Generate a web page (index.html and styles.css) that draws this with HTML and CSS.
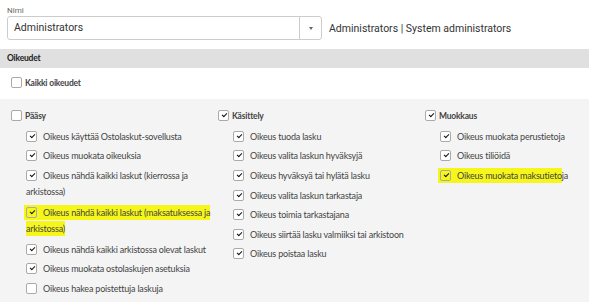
FILE: index.html
```html
<!DOCTYPE html>
<html lang="fi">
<head>
	<meta charset="UTF-8">
	<title>Oikeudet</title>
	<link rel="stylesheet" href="styles.css">
</head>
<body>
	<div class="field">
		<div class="field-label">Nimi</div>
		<div class="field-row">
			<div class="select">
				<span class="select-value">Administrators</span>
				<span class="select-btn"><span class="caret"></span></span>
			</div>
			<span class="select-desc">Administrators | System administrators</span>
		</div>
	</div>

	<div class="section-head">Oikeudet</div>

	<div class="all-row">
		<span class="cb"></span><span class="head-text">Kaikki oikeudet</span>
	</div>

	<div class="groups">
		<div class="group">
			<div class="group-head"><span class="cb"></span><span class="head-text">Pääsy</span></div>
			<div class="items">
				<div class="item"><span class="cb on"></span>Oikeus käyttää Ostolaskut-sovellusta</div>
				<div class="item"><span class="cb on"></span>Oikeus muokata oikeuksia</div>
				<div class="item tall"><span class="cb on"></span>Oikeus nähdä kaikki laskut (kierrossa ja arkistossa)</div>
				<div class="item tall"><mark class="hl"><span class="cb on"></span>Oikeus nähdä kaikki laskut (maksatuksessa ja arkistossa)</mark></div>
				<div class="item"><span class="cb on"></span>Oikeus nähdä kaikki arkistossa olevat laskut</div>
				<div class="item"><span class="cb on"></span>Oikeus muokata ostolaskujen asetuksia</div>
				<div class="item"><span class="cb"></span>Oikeus hakea poistettuja laskuja</div>
			</div>
		</div>
		<div class="group">
			<div class="group-head"><span class="cb on"></span><span class="head-text">Käsittely</span></div>
			<div class="items">
				<div class="item"><span class="cb on"></span>Oikeus tuoda lasku</div>
				<div class="item"><span class="cb on"></span>Oikeus valita laskun hyväksyjä</div>
				<div class="item"><span class="cb on"></span>Oikeus hyväksyä tai hylätä lasku</div>
				<div class="item"><span class="cb on"></span>Oikeus valita laskun tarkastaja</div>
				<div class="item"><span class="cb on"></span>Oikeus toimia tarkastajana</div>
				<div class="item"><span class="cb on"></span>Oikeus siirtää lasku valmiiksi tai arkistoon</div>
				<div class="item"><span class="cb on"></span>Oikeus poistaa lasku</div>
			</div>
		</div>
		<div class="group">
			<div class="group-head"><span class="cb on"></span><span class="head-text">Muokkaus</span></div>
			<div class="items">
				<div class="item"><span class="cb on"></span>Oikeus muokata perustietoja</div>
				<div class="item"><span class="cb on"></span>Oikeus tiliöidä</div>
				<div class="item"><mark class="hl"><span class="cb on"></span>Oikeus muokata maksutieto</mark>ja</div>
			</div>
		</div>
	</div>
</body>
</html>
```

FILE: styles.css
```css
html *{
	padding:0;
	margin:0;
}
body{
	font-family:Lato, "Open Sans", sans-serif;
	color:#333;
	background:#fff;
	height:302px;
	overflow:hidden;
}
.field{
	padding:5px 0 0 7px;
}
.field-label{
	font-family:Roboto, sans-serif;
	font-size:8px;
	line-height:11px;
	color:#666;
}
.field-row{
	display:flex;
	align-items:center;
	gap:7px;
}
.select{
	display:flex;
	width:315px;
	height:24px;
	box-sizing:border-box;
	border:1px solid #ccc;
	border-radius:3px;
}
.select-value{
	flex:1;
	font-family:Roboto, sans-serif;
	font-size:10.5px;
	line-height:22px;
	padding-left:6px;
	color:#333;
}
.select-btn{
	width:21px;
	border-left:1px solid #ccc;
	display:flex;
	align-items:center;
	justify-content:center;
}
.caret{
	width:0;
	height:0;
	border-left:2.5px solid transparent;
	border-right:2.5px solid transparent;
	border-top:3px solid #666;
}
.select-desc{
	font-family:Roboto, sans-serif;
	font-size:10.5px;
	color:#333;
}
.section-head{
	margin-top:9px;
	height:19px;
	line-height:19px;
	background:#e0e0e0;
	padding-left:7px;
	font-size:8.5px;
	font-weight:700;
	letter-spacing:-0.2px;
	color:#222;
}
.all-row{
	padding:7px 0 8px 11px;
	line-height:16px;
	font-size:8.5px;
}
.head-text{
	font-weight:700;
	color:#444;
	margin-left:3px;
	letter-spacing:-0.2px;
}
.groups{
	background:#f4f4f4;
	display:grid;
	grid-template-columns:207px 207px 1fr;
	padding-left:11px;
	height:203px;
}
.group-head{
	padding-top:9px;
	line-height:16px;
	font-size:8.5px;
	margin-bottom:3px;
}
.items{
	padding-left:15px;
	padding-right:4px;
}
.item{
	font-size:9px;
	letter-spacing:-0.2px;
	line-height:16px;
	padding:1.8px 0;
	color:#444;
}
.item.tall{
	padding-bottom:3px;
}
.cb{
	display:inline-block;
	width:11px;
	height:11px;
	box-sizing:border-box;
	border:1px solid #aaa;
	border-radius:2px;
	background:#fff;
	vertical-align:-2px;
	position:relative;
}
.item .cb{
	margin-right:6px;
}
.cb.on::after{
	content:"";
	position:absolute;
	left:2.5px;
	top:2px;
	width:4px;
	height:2px;
	border-left:1.6px solid #111;
	border-bottom:1.6px solid #111;
	transform:rotate(-45deg);
}
.hl{
	background:#f6f61a;
	color:#444;
	padding:2px 0;
	margin-left:-2px;
	padding-left:2px;
}
.hl .cb{
	background:transparent;
}
```
